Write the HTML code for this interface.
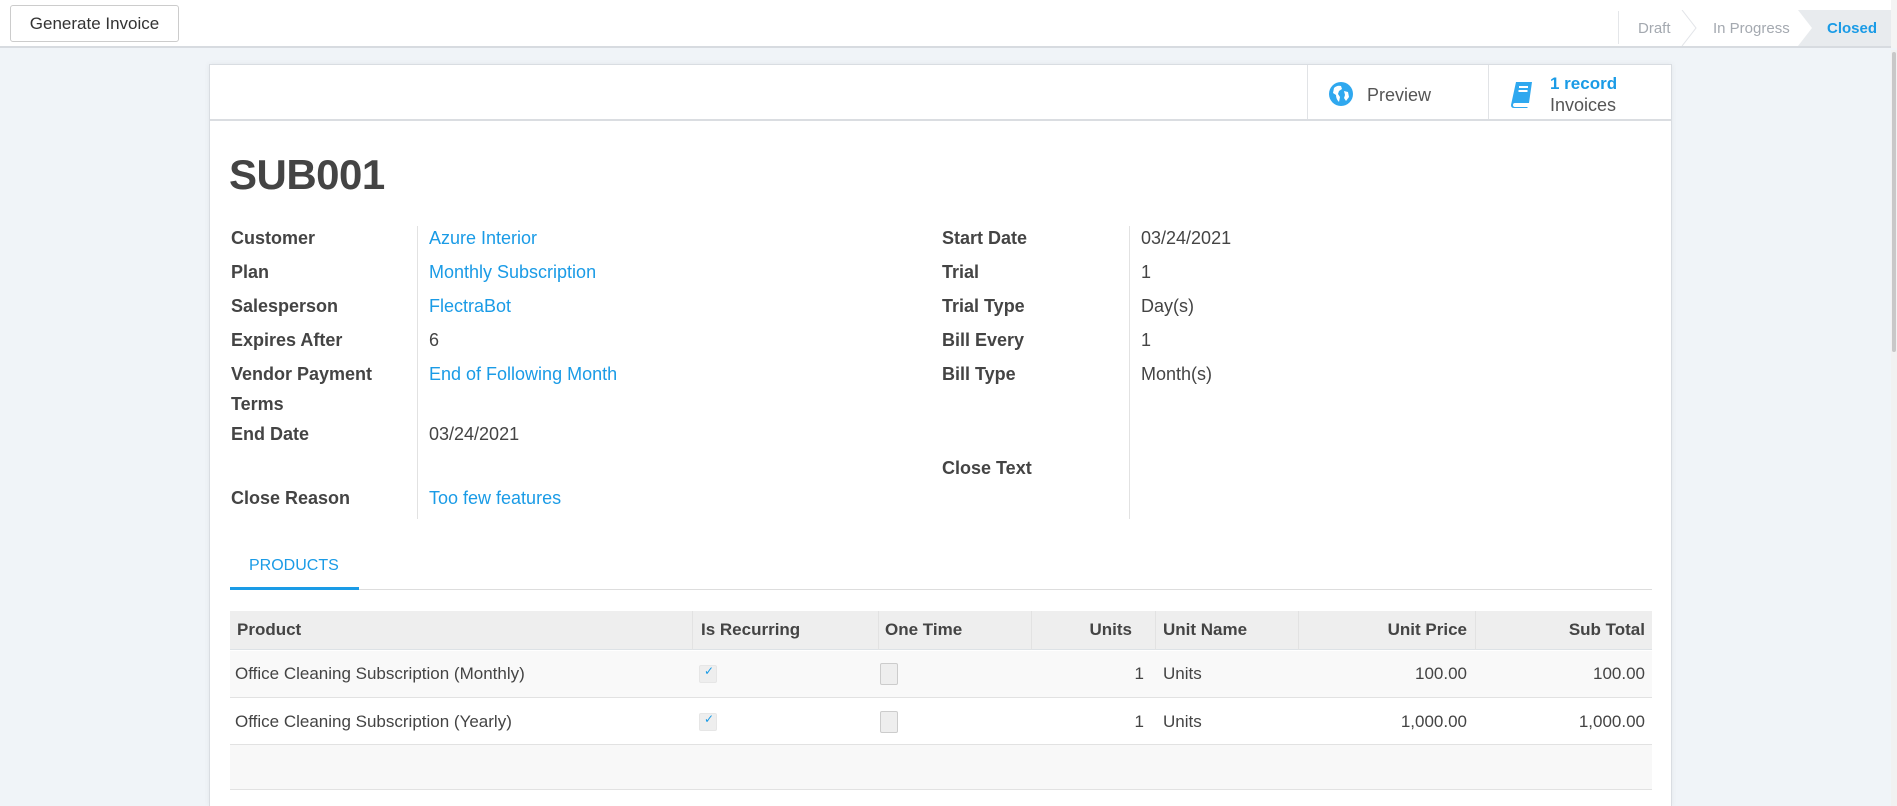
<!DOCTYPE html>
<html style="width:1897px;height:806px;overflow:hidden"><head><meta charset="utf-8"><style>
*{margin:0;padding:0;box-sizing:border-box}
body{width:1897px;height:806px;overflow:hidden;background:#f0f4f8;font-family:"Liberation Sans",sans-serif;color:#4c4c4c;position:relative}
.a{position:absolute;white-space:nowrap}
.top{position:absolute;left:0;top:0;width:1897px;height:48px;background:#fff;border-bottom:2px solid #d7dbe0}
.btn{position:absolute;left:10px;top:5px;width:169px;height:37px;border:1px solid #ccc;border-radius:3px;background:#fff;font-size:17px;color:#333;text-align:center;line-height:35px}
.sheet{position:absolute;left:209px;top:64px;width:1463px;height:742px;background:#fff;border:1px solid #d9dde2;border-bottom:none;box-shadow:0 0 6px rgba(0,0,0,.06);overflow:hidden}
.lbl{font-weight:bold;font-size:18px;color:#444}
.val{font-size:18px;color:#444}
.lnk{font-size:18px;color:#1a9be6}
.th{font-size:17px;font-weight:bold;color:#444}
.td{font-size:17px;color:#444}
.cb{position:absolute;width:18px;height:18px;border:1px solid #ccc;border-radius:2px;background:#eee}
</style></head><body>
<div class="top">
<div class="btn">Generate Invoice</div>
<div class="a" style="left:1618px;top:11px;width:1px;height:33px;background:#e4e6e9"></div>
<div class="a" style="left:1638px;top:15px;font-size:15px;line-height:28px;color:#a4a9b0">Draft</div>
<svg class="a" style="left:1680px;top:10px" width="20" height="36"><path d="M2 0 L16 18 L2 36" fill="none" stroke="#e2e4e8" stroke-width="1"/></svg>
<div class="a" style="left:1713px;top:15px;font-size:15px;line-height:28px;color:#a4a9b0">In Progress</div>
<svg class="a" style="left:1798px;top:10px" width="94" height="36"><path d="M0 0 H94 V36 H0 L14 18 Z" fill="#e8ebee"/></svg>
<div class="a" style="left:1827px;top:15px;font-size:15px;line-height:28px;font-weight:bold;color:#1a9be6">Closed</div>
<div class="a" style="left:1891px;top:0;width:6px;height:48px;background:#f4f4f4"></div>
</div>
<div class="a" style="left:1891px;top:50px;width:6px;height:756px;background:#f1f1f1"></div>
<div class="a" style="left:1892px;top:52px;width:4px;height:300px;background:#c8c8c8;border-radius:2px"></div>
<div class="sheet">
<div class="a" style="left:0;top:54px;width:1461px;height:2px;background:#dadde1"></div>
<div class="a" style="left:1097px;top:0;width:1px;height:54px;background:#e1e3e6"></div>
<div class="a" style="left:1278px;top:0;width:1px;height:54px;background:#e1e3e6"></div>
<svg class="a" style="left:1119px;top:17px" width="24" height="24" viewBox="0 0 24 24"><circle cx="12" cy="12" r="12" fill="#2fa8ef"/><path d="M5 6 Q8 3 12 4 L13 7 L10 9 L9 12 L11 15 L10 20 Q7 17 7 13 L4 11 Z M15 9 L19 10 L20 15 L17 19 L15 16 L16 13 Z" fill="#fff"/></svg>
<div class="a" style="left:1157px;top:20px;font-size:18px;color:#555">Preview</div>
<svg class="a" style="left:1301px;top:16px" width="22" height="28" viewBox="0 0 22 28"><path d="M5 1 H21 L18 22 H4 Q2 22 2 24 Q2 26 4 26 H17 L16 27 H3 Q0 27 0 24 Z" fill="#2fa8ef"/><rect x="8" y="5" width="9" height="2" fill="#fff"/><rect x="7.5" y="9" width="9" height="2" fill="#fff"/></svg>
<div class="a" style="left:1340px;top:9px;font-size:17px;font-weight:bold;color:#1a9be6">1 record</div>
<div class="a" style="left:1340px;top:30px;font-size:18px;color:#555">Invoices</div>
<div class="a" style="left:19px;top:86px;font-size:42px;font-weight:bold;color:#444;letter-spacing:-0.5px">SUB001</div>

<div class="a" style="left:207px;top:161px;width:1px;height:293px;background:#e2e2e2"></div>
<div class="a" style="left:919px;top:161px;width:1px;height:293px;background:#e2e2e2"></div>
<div class="a lbl" style="left:21px;top:163px">Customer</div><div class="a lnk" style="left:219px;top:163px">Azure Interior</div>
<div class="a lbl" style="left:21px;top:197px">Plan</div><div class="a lnk" style="left:219px;top:197px">Monthly Subscription</div>
<div class="a lbl" style="left:21px;top:231px">Salesperson</div><div class="a lnk" style="left:219px;top:231px">FlectraBot</div>
<div class="a lbl" style="left:21px;top:265px">Expires After</div><div class="a val" style="left:219px;top:265px">6</div>
<div class="a lbl" style="left:21px;top:299px">Vendor Payment</div><div class="a lnk" style="left:219px;top:299px">End of Following Month</div>
<div class="a lbl" style="left:21px;top:329px">Terms</div>
<div class="a lbl" style="left:21px;top:359px">End Date</div><div class="a val" style="left:219px;top:359px">03/24/2021</div>
<div class="a lbl" style="left:21px;top:423px">Close Reason</div><div class="a lnk" style="left:219px;top:423px">Too few features</div>

<div class="a lbl" style="left:732px;top:163px">Start Date</div><div class="a val" style="left:931px;top:163px">03/24/2021</div>
<div class="a lbl" style="left:732px;top:197px">Trial</div><div class="a val" style="left:931px;top:197px">1</div>
<div class="a lbl" style="left:732px;top:231px">Trial Type</div><div class="a val" style="left:931px;top:231px">Day(s)</div>
<div class="a lbl" style="left:732px;top:265px">Bill Every</div><div class="a val" style="left:931px;top:265px">1</div>
<div class="a lbl" style="left:732px;top:299px">Bill Type</div><div class="a val" style="left:931px;top:299px">Month(s)</div>
<div class="a lbl" style="left:732px;top:393px">Close Text</div>

<div class="a" style="left:39px;top:492px;font-size:16px;color:#1a9be6">PRODUCTS</div>
<div class="a" style="left:20px;top:524px;width:1422px;height:1px;background:#ddd"></div>
<div class="a" style="left:20px;top:522px;width:129px;height:3px;background:#1a9be6"></div>

<div class="a" style="left:20px;top:546px;width:1422px;height:39px;background:#eeeeee;border-bottom:1px solid #dde2e6"></div>
<div class="a" style="left:482px;top:546px;width:1px;height:39px;background:#e2e2e2"></div>
<div class="a" style="left:668px;top:546px;width:1px;height:39px;background:#e2e2e2"></div>
<div class="a" style="left:821px;top:546px;width:1px;height:39px;background:#e2e2e2"></div>
<div class="a" style="left:945px;top:546px;width:1px;height:39px;background:#e2e2e2"></div>
<div class="a" style="left:1088px;top:546px;width:1px;height:39px;background:#e2e2e2"></div>
<div class="a" style="left:1265px;top:546px;width:1px;height:39px;background:#e2e2e2"></div>
<div class="a th" style="left:27px;top:555px">Product</div>
<div class="a th" style="left:491px;top:555px">Is Recurring</div>
<div class="a th" style="left:675px;top:555px">One Time</div>
<div class="a th" style="right:539px;top:555px">Units</div>
<div class="a th" style="left:953px;top:555px">Unit Name</div>
<div class="a th" style="right:204px;top:555px">Unit Price</div>
<div class="a th" style="right:26px;top:555px">Sub Total</div>

<div class="a" style="left:20px;top:586px;width:1422px;height:47px;background:#f9f9f9;border-bottom:1px solid #e2e2e2"></div>
<div class="a td" style="left:25px;top:599px">Office Cleaning Subscription (Monthly)</div>
<div class="cb" style="left:489px;top:600px;border-color:#e6e6e6"><span style="position:absolute;left:4px;top:-2px;font-size:12px;color:#1a9be6">✓</span></div>
<div class="cb" style="left:670px;top:598px;height:22px"></div>
<div class="a td" style="right:527px;top:599px">1</div>
<div class="a td" style="left:953px;top:599px">Units</div>
<div class="a td" style="right:204px;top:599px">100.00</div>
<div class="a td" style="right:26px;top:599px">100.00</div>

<div class="a" style="left:20px;top:633px;width:1422px;height:47px;background:#fff;border-bottom:1px solid #e2e2e2"></div>
<div class="a td" style="left:25px;top:647px">Office Cleaning Subscription (Yearly)</div>
<div class="cb" style="left:489px;top:648px;border-color:#e6e6e6"><span style="position:absolute;left:4px;top:-2px;font-size:12px;color:#1a9be6">✓</span></div>
<div class="cb" style="left:670px;top:646px;height:22px"></div>
<div class="a td" style="right:527px;top:647px">1</div>
<div class="a td" style="left:953px;top:647px">Units</div>
<div class="a td" style="right:204px;top:647px">1,000.00</div>
<div class="a td" style="right:26px;top:647px">1,000.00</div>

<div class="a" style="left:20px;top:680px;width:1422px;height:45px;background:#f8f8f8;border-bottom:1px solid #e2e2e2"></div>
</div>
</body></html>
